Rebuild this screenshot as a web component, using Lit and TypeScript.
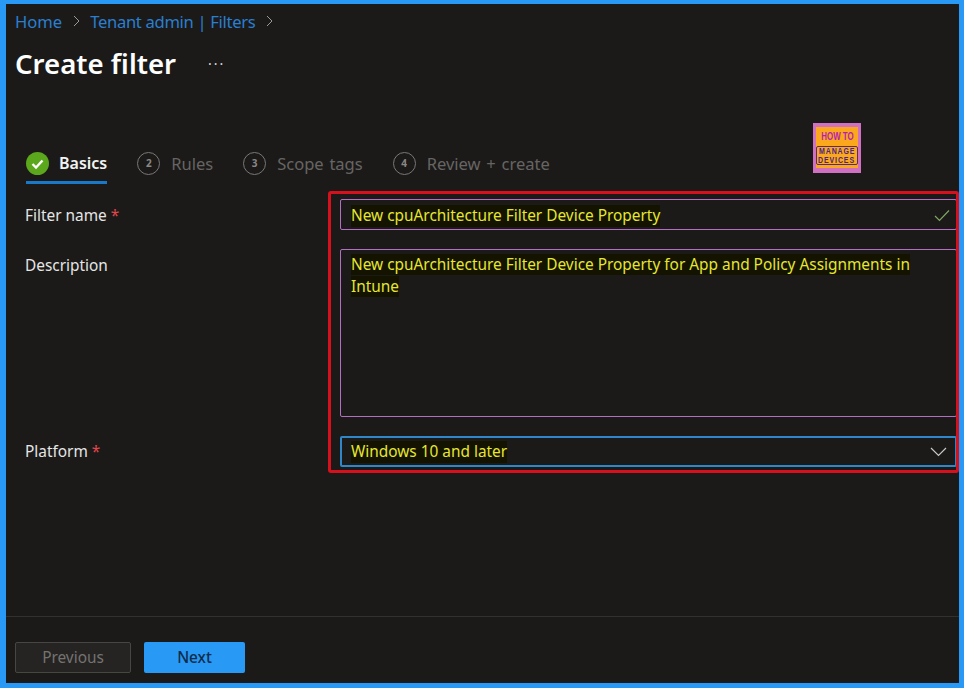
import { LitElement, html, css, svg } from 'lit';
import { customElement } from 'lit/decorators.js';

const steps = [
  { n: '2', label: 'Rules' },
  { n: '3', label: 'Scope tags' },
  { n: '4', label: 'Review + create' },
];

const chevron = svg`<path d="M1 1l5 5-5 5" fill="none" stroke="#9a9a9a" stroke-width="1"/>`;

@customElement('app-root')
export class AppRoot extends LitElement {
  static styles = css`
    :host {
      display: flex;
      flex-direction: column;
      position: relative;
      box-sizing: border-box;
      width: 964px;
      height: 688px;
      border: solid #2899f5;
      border-width: 4px 5px 5px 6px;
      background: #1b1a19;
      color: #e6e6e6;
      font-family: 'Noto Sans', 'Open Sans', sans-serif;
      font-size: 15.4px;
      overflow: hidden;
    }
    .main {
      flex: 1;
      min-height: 0;
      padding: 8px 2px 0 0;
    }
    .crumbs {
      display: flex;
      align-items: center;
      height: 18px;
      padding-left: 9px;
      color: #2a7fd0;
      font-size: 16.6px;
    }
    .crumbs svg {
      width: 8px;
      height: 12px;
      margin: 0 9px 0 11px;
    }
    .tenant {
      letter-spacing: -0.32px;
    }
    .title {
      display: flex;
      align-items: center;
      height: 38px;
      margin-top: 14px;
      padding-left: 9px;
      color: #fff;
      font-size: 27.6px;
      font-weight: 600;
    }
    .more {
      margin-left: 32px;
      font-size: 14px;
      font-weight: 400;
      letter-spacing: 2px;
      color: #ddd;
    }
    .tabs {
      display: flex;
      gap: 30px;
      height: 39px;
      margin-top: 63px;
      padding-left: 20px;
    }
    .tab {
      display: flex;
      align-items: center;
      gap: 11px;
      height: 36px;
      color: #676563;
      font-size: 16.5px;
      word-spacing: 1.5px;
    }
    .tab.on {
      gap: 10px;
      border-bottom: 3px solid #1a78c8;
      color: #f2f2f2;
      font-weight: 600;
      font-size: 16px;
    }
    .num {
      box-sizing: border-box;
      display: flex;
      align-items: center;
      justify-content: center;
      width: 23px;
      height: 23px;
      border: 1.5px solid #7a7876;
      border-radius: 50%;
      color: #8a8886;
      font-size: 10px;
      font-weight: 700;
    }
    .tab svg {
      width: 23px;
      height: 23px;
    }
    .form {
      display: grid;
      grid-template-columns: 315px 1fr;
      row-gap: 19px;
      margin-top: 15px;
      padding-left: 19px;
    }
    .label {
      padding-top: 6px;
      color: #e6e6e6;
    }
    .label.last {
      padding-top: 5px;
    }
    .req {
      color: #e0474c;
    }
    .field {
      box-sizing: border-box;
      display: flex;
      justify-content: space-between;
      align-items: center;
      height: 31px;
      padding: 2px 6px 0 10px;
      border: 1px solid #b36fc4;
      border-radius: 2px;
      color: #e6e633;
      line-height: 22px;
    }
    .field.area {
      display: block;
      height: 168px;
      padding-top: 4px;
    }
    .field.select {
      border: 2px solid #2f86c9;
      padding: 0 8px 0 9px;
    }
    mark {
      background: #131300;
      color: inherit;
    }
    .field svg {
      flex: none;
    }
    .footer {
      display: flex;
      align-items: flex-start;
      gap: 13px;
      box-sizing: border-box;
      height: 67px;
      padding: 25px 0 0 9px;
      border-top: 1px solid #323130;
    }
    .btn {
      box-sizing: border-box;
      display: flex;
      align-items: center;
      justify-content: center;
      height: 31px;
      border-radius: 2px;
    }
    .btn.prev {
      width: 116px;
      border: 1px solid #484644;
      background: #252423;
      color: #757371;
    }
    .btn.next {
      width: 101px;
      background: #2899f5;
      color: #0f2c4a;
      font-weight: 500;
    }
    .logo {
      position: absolute;
      left: 807px;
      top: 119px;
      box-sizing: border-box;
      width: 48px;
      height: 50px;
      padding: 4px 3px 5px;
      background: #d070c0;
    }
    .logo-in {
      display: flex;
      flex-direction: column;
      align-items: center;
      height: 100%;
      background: #fba81c;
      font-family: 'Liberation Sans', sans-serif;
      font-weight: 700;
    }
    .how {
      margin: 4px 0 5px;
      color: #b61fb0;
      font-size: 11px;
      line-height: 10px;
      white-space: nowrap;
      transform: scaleX(0.72);
    }
    .brand {
      box-sizing: border-box;
      display: flex;
      flex-direction: column;
      align-items: center;
      width: 42px;
      height: 19px;
      border: 1px solid #5a2a78;
      border-radius: 2px;
      color: #4b2580;
      font-size: 8.5px;
      line-height: 8.5px;
      letter-spacing: 1.1px;
      white-space: nowrap;
    }
    .brand span {
      transform: scaleX(0.82);
    }
    .callout {
      position: absolute;
      left: 322px;
      top: 187px;
      box-sizing: border-box;
      width: 631px;
      height: 282px;
      border: 3px solid #d6101c;
      border-radius: 3px;
      pointer-events: none;
    }
  `;

  render() {
    return html`
      <div class="main">
        <nav class="crumbs">
          <span>Home</span>
          <svg viewBox="0 0 8 12">${chevron}</svg>
          <span class="tenant">Tenant admin | Filters</span>
          <svg viewBox="0 0 8 12">${chevron}</svg>
        </nav>
        <div class="title">Create filter<span class="more">···</span></div>
        <div class="tabs">
          <div class="tab on">
            <svg viewBox="0 0 23 23">
              <circle cx="11.5" cy="11.5" r="11.5" fill="#5ca81c" />
              <path d="M6.5 12l3.5 3.5 6.5-7" fill="none" stroke="#fff" stroke-width="2.4" />
            </svg>
            Basics
          </div>
          ${steps.map(
            (s) => html`<div class="tab"><span class="num">${s.n}</span>${s.label}</div>`
          )}
        </div>
        <div class="form">
          <div class="label">Filter name <span class="req">*</span></div>
          <div class="field">
            <mark>New cpuArchitecture Filter Device Property</mark>
            <svg width="16" height="13" viewBox="0 0 16 13">
              <path d="M1 7l4.5 4.5L15 1.5" fill="none" stroke="#7fa860" stroke-width="1.2" />
            </svg>
          </div>
          <div class="label">Description</div>
          <div class="field area">
            <mark>New cpuArchitecture Filter Device Property for App and Policy Assignments in Intune</mark>
          </div>
          <div class="label last">Platform <span class="req">*</span></div>
          <div class="field select">
            <mark>Windows 10 and later</mark>
            <svg width="17" height="10" viewBox="0 0 17 10">
              <path d="M1 1l7.5 7.5L16 1" fill="none" stroke="#c8c8c8" stroke-width="1.2" />
            </svg>
          </div>
        </div>
      </div>
      <div class="footer">
        <div class="btn prev">Previous</div>
        <div class="btn next">Next</div>
      </div>
      <div class="logo">
        <div class="logo-in">
          <div class="how">HOW TO</div>
          <div class="brand"><span>MANAGE</span><span>DEVICES</span></div>
        </div>
      </div>
      <div class="callout"></div>
    `;
  }
}
